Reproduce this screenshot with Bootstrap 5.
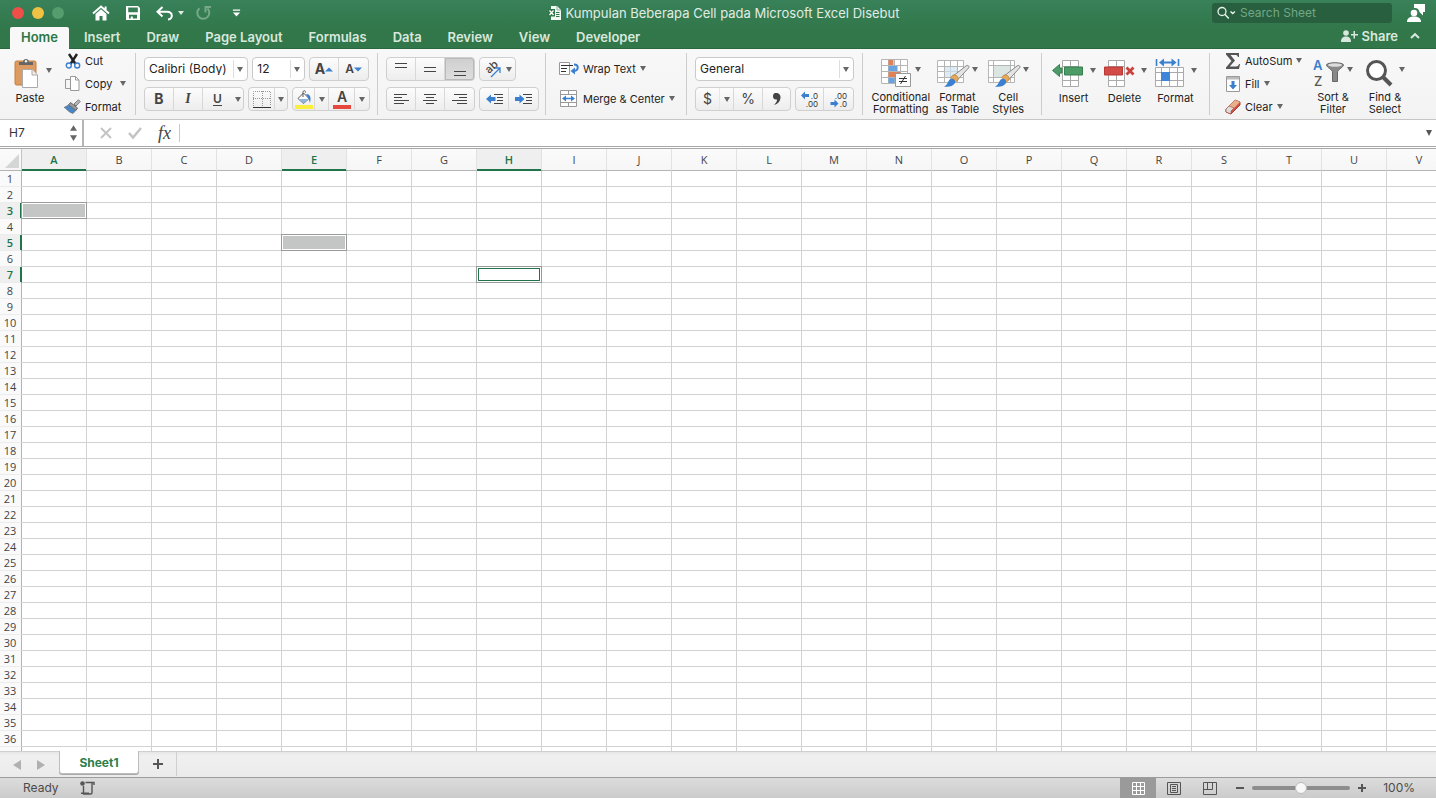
<!DOCTYPE html>
<html lang="en">
<head>
<meta charset="utf-8">
<meta name="viewport" content="width=device-width, initial-scale=1">
<title>Kumpulan Beberapa Cell pada Microsoft Excel Disebut</title>
<link href="https://cdn.jsdelivr.net/npm/bootstrap@5.3.0/dist/css/bootstrap.min.css" rel="stylesheet">
<style>
  body { font-family: Inter, "Liberation Sans", sans-serif; font-size: 11px; line-height: 12px; color: #222; height: 100vh; overflow: hidden; background: #fff; }
  svg { display: block; flex: none; overflow: visible; }
  button { font: inherit; color: inherit; }
  .bare { background: none; border: 0; padding: 0; }
  .caret { width: 0; height: 0; flex: none; border: 3px solid transparent; border-top: 5px solid #666; border-bottom: 0; }

  /* title bar and ribbon tabs */
  .titlebar { background: linear-gradient(#39815a, #31774a 60%, #31774a); border-bottom: 1px solid #2a6841; color: #e0ece4; }
  .title-row { height: 27px; padding-bottom: 1px; }
  .side-part { flex: 1 1 0; }
  .light { width: 12px; height: 12px; border-radius: 50%; }
  .light-close { background: #ef4f49; }
  .light-min { background: #f0c243; }
  .light-max { background: #559d6d; }
  .doc-title { font-size: 13px; line-height: 16px; white-space: nowrap; }
  .quick { padding-left: 12px; }
  .search { width: 180px; height: 20px; background: #285f3e; border-radius: 3px; color: #fff; }
  .search input { background: none; border: 0; outline: 0; color: #fff; font-size: 12px; min-width: 0; line-height: 16px; padding: 0; }
  .search input::placeholder { color: #72a787; opacity: 1; }
  .ribbon-tabs { gap: 4px; padding-left: 10px; }
  .ribbon-tabs .nav-link { font-size: 13px; color: #d9e8de; font-weight: 600; line-height: 18px; padding: 1px 11px 3px; border: 0; border-radius: 2px 2px 0 0; white-space: nowrap; }
  .ribbon-tabs .nav-link.active { background: #f8f8f8; color: #2a7747; }
  .share { font-size: 13px; font-weight: 600; line-height: 16px; color: #d9e8de; }

  /* ribbon */
  .ribbon { background: linear-gradient(#f8f8f8, #f3f3f3); border-bottom: 1px solid #c6c6c6; padding: 4px 0; height: 71px; overflow: hidden; }
  .rgroup { border-right: 1px solid #cdcdcd; padding: 4px 8px 0; height: 62px; flex: none; }
  .rgroup:last-child { border: 0; }
  .tool-row { display: flex; height: 24px; gap: 4px; }
  .tool-row + .tool-row { margin-top: 6px; }
  .tools { display: flex; border: 1px solid #cfcfcf; border-radius: 4px; background: linear-gradient(#fcfcfc, #ededed); }
  .tools button { width: 29px; display: flex; align-items: center; justify-content: center; background: none; border: 0; border-right: 1px solid #d8d8d8; padding: 0; color: #444; }
  .tools button:last-child { border-right: 0; }
  .tools button.on { background: linear-gradient(#cfcfcf, #dedede); box-shadow: inset 0 0 0 1px #b9b9b9; border-radius: 0 3px 3px 0; }
  .tools button.drop { width: 14px; }
  .glyph { font-size: 14px; line-height: 20px; font-weight: 700; }
  .combo { appearance: none; height: 24px; border: 1px solid #cacaca; border-radius: 4px; font-size: 12px; color: #222; padding: 0 18px 0 4px;
    background: #fff url("data:image/svg+xml,%3Csvg xmlns='http://www.w3.org/2000/svg' width='14' height='18'%3E%3Cpath d='M.5 0v18' stroke='%23ddd'/%3E%3Cpath d='M4 7h6l-3 5z' fill='%23666'/%3E%3C/svg%3E") no-repeat right 0 center; }
  .stack { display: flex; flex-direction: column; margin-top: -8px; }
  .stack button, .side button { display: flex; flex: none; align-items: center; gap: 4px; height: 23px; white-space: nowrap; }
  .stack .pic { width: 17px; display: flex; justify-content: center; }
  .big { display: flex; flex-direction: column; align-items: center; width: 52px; white-space: nowrap; text-align: center; }
  .big .pic { display: flex; align-items: center; gap: 2px; height: 32px; margin-bottom: 3px; }
  .big .caret { margin-top: -6px; }
  .paste-label { width: 32px; }

  /* formula bar */
  .formula { height: 29px; border-bottom: 1px solid #a9a9a9; background: #fff; }
  .formula-in { height: 27px; border-bottom: 1px solid #a9a9a9; }
  .namebox { width: 84px; border-right: 2px solid #b5b5b5; padding: 0 5px 0 9px; }
  .namebox input, .fx-input { border: 0; outline: 0; background: none; font-size: 12px; line-height: 16px; min-width: 0; color: #333; padding: 0; }
  .fx { font: italic 18px/20px "Liberation Serif", serif; color: #444; }

  /* sheet */
  .sheet { overflow: hidden; min-height: 0; }
  .cells { border-collapse: separate; border-spacing: 0; table-layout: fixed; width: 0; font-family: "Open Sans", "Noto Sans", sans-serif; font-size: 11px; line-height: 15px; color: #444; }
  .cells th { font-weight: 400; text-align: center; padding: 0; }
  .cells thead th { width: 65px; height: 22px; background: linear-gradient(#fbfbfb, #f6f6f6); border-right: 1px solid #e2e2e2; border-bottom: 1px solid #b4b4b4; }
  .cells thead th.corner { width: 22px; border-right-color: #c4c4c4; }
  .cells thead th.hit { background: #efefef; border-bottom-color: #21744a; box-shadow: inset 0 -1px #21744a; color: #21744a; font-weight: 600; }
  .cells tbody th { height: 16px; background: #fafafa; border-right: 1px solid #b4b4b4; border-bottom: 1px solid #ececec; padding-right: 1px; }
  .cells tbody th.hit { background: #efefef; border-right-color: #21744a; box-shadow: inset -1px 0 #21744a; color: #21744a; font-weight: 600; }
  .cells td { padding: 0; border-right: 1px solid #d2d2d2; border-bottom: 1px solid #d2d2d2; position: relative; }
  .cells td.picked::before, .cells td.current::before { content: ""; position: absolute; inset: -1px; border: 1px solid #9a9a9a; padding: 1px; background: #c3c6c5 content-box; }
  .cells td.current::before { background: #fff; }
  .cells td.current::after { content: ""; position: absolute; inset: 1px; border: 1px solid #21744a; }

  /* sheet tabs and status bar */
  .tabstrip { height: 27px; background: linear-gradient(#e6e6e6, #f0f0f0 4px, #ebebeb); border-top: 1px solid #cfcfcf; border-bottom: 1px solid #9c9c9c; }
  .arrows { width: 59px; padding-left: 13px; }
  .add-sheet { width: 38px; height: 24px; border-right: 1px solid #cfcfcf; }
  .sheet-tab { width: 80px; height: 23px; margin-top: -1px; background: #fff; border: 1px solid #bdbdbd; border-top: 0; border-radius: 0 0 3px 3px; box-shadow: 0 1px 0 #aaa; color: #2a7f4b; font-weight: 700; font-size: 12px; line-height: 16px; padding: 2px 0 0; }
  .statusbar { height: 20px; background: linear-gradient(#dcdcdc, #cbcbcb); color: #4b4b4b; font-size: 12px; line-height: 20px; padding: 0 21px 0 23px; gap: 21px; }
  .view { width: 36px; height: 20px; display: flex; align-items: center; justify-content: center; }
  .view.on { background: #9a9a9a; }
  .zoom { appearance: none; width: 98px; height: 4px; background: #8d8d8d; border-radius: 2px; margin: 0; }
  .zoom::-webkit-slider-thumb { appearance: none; width: 12px; height: 12px; border-radius: 50%; background: #f8f8f8; border: 1px solid #bbb; }
  .zoom-value { width: 49px; }
</style>
</head>
<body class="d-flex flex-column">

<header class="titlebar flex-shrink-0">
  <div class="title-row d-flex align-items-center">
    <div class="quick side-part d-flex align-items-center">
      <div class="d-flex gap-2">
        <span class="light light-close"></span>
        <span class="light light-min"></span>
        <span class="light light-max"></span>
      </div>
      <button class="bare ms-4 ps-1" aria-label="Home"><svg width="18" height="16" viewBox="0 0 18 16"><path d="M1 8.600 9 1.500l8 7.100M13.600 1.500v4" fill="none" stroke="#fff" stroke-width="2"/><path d="M3.500 9 9 4.200 14.500 9v6.500h-4V11h-3v4.500h-4z" fill="#fff"/></svg></button>
      <button class="bare ms-3" aria-label="Save"><svg width="14" height="14" viewBox="0 0 14 14"><path d="M0 0h12l2 2v12H0zM2.200 1.500v4.800h9.600V1.500zM3 8.800v3.700h1.800V10.500h2v2H11V8.800z" fill="#fff" fill-rule="evenodd"/></svg></button>
      <button class="bare ms-3 d-flex align-items-center gap-1" aria-label="Undo"><svg width="18" height="15" viewBox="0 0 18 15"><path d="M6.500 1 1.500 5.800l5 4.700M2 5.800h9c6 0 6.500 7.200 1 7.700" fill="none" stroke="#fff" stroke-width="2"/></svg><svg width="6" height="4"><path d="M0 0h6L3 4z" fill="#e0ece4"/></svg></button>
      <button class="bare ms-2 ps-1" aria-label="Redo"><svg width="16" height="16" viewBox="0 0 16 16"><path d="M3.500 3.200a6 6 0 1 0 8 .3M9.500 7.500V2H15" fill="none" stroke="#75a988" stroke-width="2"/></svg></button>
      <button class="bare ms-3 ps-1" aria-label="Customize toolbar"><svg width="9" height="8" viewBox="0 0 10 8"><path d="M1 0h8v1.500H1zM1 3.500h8L5 7.800z" fill="#fff"/></svg></button>
    </div>
    <div class="doc-title d-flex align-items-center gap-1">
      <svg width="13" height="14" viewBox="0 0 13 14"><path d="M3 0h6l4 4v10H3z" fill="#f3f8f5"/><path d="M9 0v4h4" fill="none" stroke="#8ab69b"/><path d="M8 6.500h3.500M8 8.500h3.500M8 10.500h3.500" stroke="#31774a"/><path d="M0 3h7v7.500H0z" fill="#31774a"/><path d="m1.500 4.500 4 4.500m0-4.500-4 4.500" stroke="#fff" stroke-width="1.300"/></svg>
      <span>Kumpulan Beberapa Cell pada Microsoft Excel Disebut</span>
    </div>
    <div class="side-part d-flex align-items-center justify-content-end">
      <label class="search d-flex align-items-center px-1 me-3">
        <svg class="me-1" width="20" height="14" viewBox="0 0 20 14"><circle cx="6" cy="5.500" r="4" fill="none" stroke="#e9f2ec" stroke-width="1.300"/><path d="m9 8.500 3.800 4M14.500 5.500l2.200 2 2.200-2" fill="none" stroke="#e9f2ec" stroke-width="1.500"/></svg>
        <input class="flex-fill" type="text" placeholder="Search Sheet" aria-label="Search Sheet">
      </label>
      <button class="bare me-2" aria-label="Account"><svg width="20" height="18" viewBox="2 0 20 18"><path d="M8 0h11v8h-2v3.500L13.500 8C13 4.500 10.500 3.500 8 4z" fill="#fff"/><circle cx="8" cy="9" r="3.300" fill="#fff"/><path d="M1 18c0-4 3-5.500 7-5.500s7 1.500 7 5.500z" fill="#fff"/></svg></button>
    </div>
  </div>
  <div class="d-flex align-items-end">
    <ul class="nav nav-tabs ribbon-tabs border-0 flex-fill flex-nowrap">
      <li class="nav-item"><a class="nav-link active" href="#">Home</a></li>
      <li class="nav-item"><a class="nav-link" href="#">Insert</a></li>
      <li class="nav-item"><a class="nav-link" href="#">Draw</a></li>
      <li class="nav-item"><a class="nav-link" href="#">Page Layout</a></li>
      <li class="nav-item"><a class="nav-link" href="#">Formulas</a></li>
      <li class="nav-item"><a class="nav-link" href="#">Data</a></li>
      <li class="nav-item"><a class="nav-link" href="#">Review</a></li>
      <li class="nav-item"><a class="nav-link" href="#">View</a></li>
      <li class="nav-item"><a class="nav-link" href="#">Developer</a></li>
    </ul>
    <div class="share d-flex align-items-center gap-1 pb-1 pe-3">
      <button class="bare d-flex align-items-center gap-1"><svg width="18" height="12" viewBox="0 0 18 12"><circle cx="6" cy="3" r="2.800" fill="#d9e8de"/><path d="M1 12c0-4 2-5.500 5-5.500s5 1.500 5 5.500zM11 4h2.500V1H15v3h3v1.500h-3v3h-1.500v-3H11z" fill="#d9e8de"/></svg>Share</button>
      <button class="bare ms-2" aria-label="Collapse ribbon"><svg width="10" height="6" viewBox="0 0 10 6"><path d="m1 5 4-3.800L9 5" fill="none" stroke="#d9e8de" stroke-width="2"/></svg></button>
    </div>
  </div>
</header>

<div class="ribbon d-flex flex-shrink-0" role="toolbar" aria-label="Home">
  <!-- clipboard -->
  <div class="rgroup d-flex" style="width:136px;padding-left:14px">
    <button class="bare big align-items-start" style="width:46px">
      <span class="pic"><svg width="26" height="31" viewBox="0 0 26 31"><rect x="1" y="3" width="21" height="24" rx="1.500" fill="#dd9b62" stroke="#c38040"/><path d="M5 7V4h4c0-4 6-4 6 0h4v3z" fill="#666"/><circle cx="12" cy="3.300" r="1.200" fill="#f3f3f3"/><path d="M8.500 11.500H18l5.500 5.500v12.500h-15z" fill="#fff" stroke="#aaa"/><path d="M18 11.500V17h5.500" fill="#eee" stroke="#aaa"/></svg><span class="caret ms-1"></span></span>
      <span class="paste-label">Paste</span>
    </button>
    <div class="stack ms-1">
      <button class="bare"><span class="pic"><svg width="16" height="16" viewBox="0 0 16 16"><path d="m4 1 6.500 10M12 1 5.500 11" stroke="#222" stroke-width="2.400"/><circle cx="3.800" cy="12.500" r="2.500" fill="none" stroke="#3a80cf" stroke-width="1.400"/><circle cx="12.200" cy="12.500" r="2.500" fill="none" stroke="#3a80cf" stroke-width="1.400"/></svg></span>Cut</button>
      <button class="bare"><span class="pic"><svg width="15" height="16" viewBox="0 0 15 16"><path d="M.5 3.500h7v9h-7z" fill="#f5f5f5" stroke="#999"/><path d="M5.500.500h5l3.500 3.500v10.500H5.500z" fill="#fff" stroke="#999"/><path d="M10.500.500V4H14" fill="none" stroke="#999"/></svg></span>Copy<span class="caret ms-1"></span></button>
      <button class="bare"><span class="pic"><svg width="17" height="15" viewBox="0 0 17 15"><path d="M10 5 14.500.800l1.700 1.700L12 7z" fill="#bbb" stroke="#777"/><path d="m6.500 3.500 7 5.500-1.700 2.500L4.500 6z" fill="#999" stroke="#666"/><path d="M4.500 6 0 8.500c2.500.5 3.500 4.500 9 6l2.800-3z" fill="#4a86c5" stroke="#666" stroke-width=".6"/></svg></span>Format</button>
    </div>
  </div>
  <!-- font -->
  <div class="rgroup" style="width:242px">
    <div class="tool-row">
      <select class="combo" style="width:105px" aria-label="Font"><option>Calibri (Body)</option></select>
      <select class="combo" style="width:53px" aria-label="Font size"><option>12</option></select>
      <div class="tools">
        <button aria-label="Increase font size"><span class="glyph">A</span><svg width="8" height="5"><path d="M0 4.500 4 .5l4 4z" fill="#3a80cf"/></svg></button>
        <button aria-label="Decrease font size"><span style="font-size:12px;font-weight:600">A</span><svg width="8" height="5"><path d="M0 .5h8l-4 4z" fill="#3a80cf"/></svg></button>
      </div>
    </div>
    <div class="tool-row">
      <div class="tools">
        <button class="glyph">B</button>
        <button class="glyph" style="font-family:'Liberation Serif',serif"><i>I</i></button>
        <button class="glyph border-0"><span style="border-bottom:1px solid #444;font-size:12px;line-height:13px;font-weight:600">U</span></button>
        <button class="drop" style="width:11px" aria-label="Underline style"><span class="caret"></span></button>
      </div>
      <div class="tools">
        <button aria-label="Borders" style="width:26px"><svg width="18" height="17" viewBox="0 0 18 17"><path d="M.5 15V.5h17V15M9.500 0v15M0 7.500h18" fill="none" stroke="#999" stroke-dasharray="1 1"/><path d="M0 16.500h18" stroke="#333"/></svg></button>
        <button class="drop" style="width:12px" aria-label="Border options"><span class="caret"></span></button>
      </div>
      <div class="tools">
        <button aria-label="Fill color" style="width:22px"><svg width="18" height="19" viewBox="0 0 18 19"><path d="M3 8.500 8.500 3l5.500 5.500-5.500 5z" fill="#fff" stroke="#555"/><path d="M3.500 9h10l-5 4.500z" fill="#8fb7e3"/><path d="M8 7V2.500C8 0 10.500 0 10.500 2.500" fill="none" stroke="#555"/><path d="M11 4c4 0 5.500 3 4 9-1-2-.5-4-2-5z" fill="#3a80cf"/><path d="M0 15h18v4H0z" fill="#fbef3d"/></svg></button>
        <button class="drop" aria-label="Fill options"><span class="caret"></span></button>
        <button style="width:26px" aria-label="Font color"><svg width="18" height="19" viewBox="0 0 18 19"><text x="9" y="12" text-anchor="middle" font-size="14" font-weight="600" fill="#444">A</text><path d="M0 15h18v4H0z" fill="#e6483f"/></svg></button>
        <button class="drop" aria-label="Font color options"><span class="caret"></span></button>
      </div>
    </div>
  </div>
  <!-- alignment -->
  <div class="rgroup" style="width:168px">
    <div class="tool-row">
      <div class="tools">
        <button aria-label="Top align"><svg width="12" height="16"><path d="M0 2.500h12M0 6.500h12" stroke="#444"/></svg></button>
        <button aria-label="Middle align"><svg width="12" height="16"><path d="M0 6.500h12M0 10.500h12" stroke="#444"/></svg></button>
        <button class="on" aria-label="Bottom align"><svg width="12" height="16"><path d="M0 10.500h12M0 14.500h12" stroke="#444"/></svg></button>
      </div>
      <div class="tools">
        <button style="width:35px;gap:4px" aria-label="Orientation"><svg width="18" height="18" viewBox="0 0 18 18"><text x="5" y="14" font-size="11" font-weight="500" fill="#444" transform="rotate(-42 5 14)">ab</text><path d="m7 17 8.500-8.500M11 8h5v5" fill="none" stroke="#3a80cf" stroke-width="1.300"/></svg><span class="caret"></span></button>
      </div>
    </div>
    <div class="tool-row">
      <div class="tools">
        <button aria-label="Align left"><svg width="15" height="12"><path d="M0 1.500h13M0 4.500h8M0 7.500h15M0 10.500h10" stroke="#444"/></svg></button>
        <button aria-label="Center"><svg width="14" height="12"><path d="M1 1.500h12M3 4.500h8M0 7.500h14M3 10.500h8" stroke="#444"/></svg></button>
        <button aria-label="Align right"><svg width="15" height="12"><path d="M2 1.500h13M7 4.500h8M0 7.500h15M5 10.500h10" stroke="#444"/></svg></button>
      </div>
      <div class="tools">
        <button aria-label="Decrease indent"><svg width="17" height="12"><path d="M8 1.500h9M11 4.500h6M11 7.500h6M8 10.500h9" stroke="#444"/><path d="m0 6 5-4.500V4h4.500v4H5v2.500z" fill="#3a80cf"/></svg></button>
        <button aria-label="Increase indent"><svg width="17" height="12"><path d="M8 1.500h9M11 4.500h6M11 7.500h6M8 10.500h9" stroke="#444"/><path d="M9.500 6l-5-4.500V4H0v4h4.500v2.500z" fill="#3a80cf"/></svg></button>
      </div>
    </div>
  </div>
  <div class="rgroup side" style="width:141px;padding-left:13px">
    <div class="tool-row"><button class="bare"><svg width="20" height="13" viewBox="0 0 20 13"><path d="M.5.500h10v12H.5z" fill="#fff" stroke="#999"/><path d="M2 3.500h12M2 6.500h6M2 9.500h5" stroke="#333"/><path d="M15 2.500c5 0 5 6 0 6.500" fill="none" stroke="#3a80cf" stroke-width="2"/><path d="m11.500 9 4.500-3.500v7z" fill="#3a80cf"/></svg>Wrap Text<span class="caret"></span></button></div>
    <div class="tool-row"><button class="bare"><svg width="20" height="17" viewBox="0 0 20 17"><path d="M1.500.500h16v16h-16zM1.500 4.500h16M1.500 12.500h16M9.500.500v4M9.500 12.500v4" fill="#fff" stroke="#999"/><path d="M5 8.500h9" stroke="#3a80cf" stroke-width="1.500"/><path d="m3 8.500 4-3v6zM16 8.500l-4-3v6z" fill="#3a80cf"/></svg>Merge &amp; Center<span class="caret"></span></button></div>
  </div>
  <!-- number -->
  <div class="rgroup" style="width:176px">
    <div class="tool-row"><select class="combo" style="width:159px" aria-label="Number format"><option>General</option></select></div>
    <div class="tool-row">
      <div class="tools">
        <button style="width:24px;font-size:14px;border-right-color:#e6e6e6">$</button>
        <button class="drop" aria-label="Currency options"><span class="caret"></span></button>
        <button style="font-size:14px">%</button>
        <button aria-label="Comma style" style="width:27px"><svg width="8" height="12" viewBox="0 0 8 12"><path d="M1 .5c4-1.500 7 1 6.500 4.500C7 8.500 5 11 1 12 3.500 9.500 4 8 4 6.500 1.500 7 0 5.500 0 3.500 0 2 .4 1 1 .5z" fill="#444"/></svg></button>
      </div>
      <div class="tools">
        <button style="width:28px" aria-label="Increase decimal"><svg width="18" height="17" viewBox="0 0 18 17"><path d="m0 4.500 4-4V3h4v3H4v2.500z" fill="#3a80cf"/><text x="17" y="8" text-anchor="end" font-size="8" fill="#333">.0</text><text x="17" y="16" text-anchor="end" font-size="8" fill="#333">.00</text></svg></button>
        <button aria-label="Decrease decimal"><svg width="18" height="17" viewBox="0 0 18 17"><path d="m8.500 12.500-4-4V11h-4v3h4v2.500z" fill="#3a80cf"/><text x="17" y="8" text-anchor="end" font-size="8" fill="#333">.00</text><text x="17" y="16" text-anchor="end" font-size="8" fill="#333">.0</text></svg></button>
      </div>
    </div>
  </div>
  <!-- styles -->
  <div class="rgroup d-flex" style="width:179px;padding-left:7px">
    <button class="bare big" style="width:62px"><span class="pic gap-1"><svg width="30" height="28" viewBox="0 0 30 28"><path d="M.5.500h26v24H.5zM7.500.500v24M13.500.500v24M19.500.500v24M.5 6.500h26M.5 12.500h26M.5 18.500h26" fill="#fff" stroke="#b5b5b5"/><path d="M7.500 1h5v5h-5zM7.500 13h12v5h-12z" fill="#e08158"/><path d="M7.500 7h9v5h-9zM7.500 19h6v5h-6z" fill="#6aa4e0"/><path d="M14.500 14.500h15v13h-15z" fill="#fff" stroke="#999"/><path d="M18 19.500h8M18 22.500h8M24.500 17l-5 8" stroke="#333"/></svg><span class="caret"></span></span><span>Conditional<br>Formatting</span></button>
    <button class="bare big"><span class="pic"><svg width="33" height="28" viewBox="0 0 33 28"><path d="M.5 1.500h26v22H.5zM7.500 1.500v22M13.500 1.500v22M20.500 1.500v22M.5 7.500h26M.5 12.500h26M.5 18.500h26" fill="#fff" stroke="#b5b5b5"/><path d="M8 8h12v10H8z" fill="#cfe3ef" fill-opacity=".7"/><use href="#brush"/></svg><span class="caret"></span></span><span>Format<br>as Table</span></button>
    <button class="bare big" style="width:50px"><span class="pic"><svg width="33" height="28" viewBox="0 0 33 28"><path d="M.5 1.500h26v22H.5zM5.500 1.500v22M22.500 1.500v22M.5 6.500h26M.5 18.500h26" fill="#fff" stroke="#b5b5b5"/><path d="M6 7h16v11H6z" fill="#dbe6e2"/><g id="brush"><path d="M16 17 29 7c2-1.500 4 .5 2.500 2L20.500 21z" fill="#e4e4e4" stroke="#888"/><path d="M14 18.500c1-3.500 5-3 6.500-1 2 3-1 6-3.500 5z" fill="#e6a95a" stroke="#b77a2c" stroke-width=".7"/><path d="M13.500 20c3-1 5.500 1.500 4.500 4-2.500 4-7 4-11 3.500 4-1.500 3.500-5.500 6.500-7.500z" fill="#3a7fd0"/></g></svg><span class="caret"></span></span><span>Cell<br>Styles</span></button>
  </div>
  <!-- cells -->
  <div class="rgroup d-flex" style="width:168px;padding-left:6px">
    <button class="bare big"><span class="pic"><svg width="32" height="27" viewBox="0 0 32 27"><path d="M10.500.500h16v26h-16zM18.500.500v26M10.500 6.500h16M10.500 20.500h16" fill="#fff" stroke="#aaa"/><path d="m.5 10.500 7-6V8H10v5H7.500v3.500zM12.500 7h18v8h-18z" fill="#4d9c67" stroke="#39804f"/></svg><span class="caret ms-1"></span></span><span>Insert</span></button>
    <button class="bare big"><span class="pic"><svg width="32" height="27" viewBox="0 0 32 27"><path d="M5.500.500h16v26h-16zM13.500.500v26M5.500 6.500h16M5.500 20.500h16" fill="#fff" stroke="#aaa"/><path d="M1.500 7h18v8h-18z" fill="#d24b47" stroke="#b83833"/><path d="m23.500 7.500 7 7m0-7-7 7" stroke="#c9413c" stroke-width="2.800"/></svg><span class="caret ms-1"></span></span><span>Delete</span></button>
    <button class="bare big"><span class="pic"><svg width="30" height="30" viewBox="0 0 30 30"><path d="M1.500 1v7M23.500 1v7" stroke="#3a80cf" stroke-width="1.600"/><path d="M8 4.500h10" stroke="#3a80cf" stroke-width="2"/><path d="m4 4.500 5-4v8zM21.500 4.500l-5-4v8z" fill="#3a80cf"/><path d="M.5 9.500h28v19H.5zM6.500 9.500v19M14.500 9.500v19M22.500 9.500v19M.5 14.500h28M.5 22.500h28" fill="#fff" stroke="#aaa"/><path d="M6 14h9v9H6z" fill="#3f86d8"/></svg><span class="caret ms-1"></span></span><span>Format</span></button>
  </div>
  <!-- editing -->
  <div class="rgroup d-flex" style="padding-left:14px">
    <div class="stack" style="width:83px">
      <button class="bare"><span class="pic"><svg width="14" height="16" viewBox="0 0 14 16"><path d="M0 0h13v4h-1c-.5-1.500-1-2-3-2H4.500l4.500 5.500L3.800 13.500H10c2 0 2.500-1 3-2.500h1l-1 5H0v-1.500L5.500 8 0 1.500z" fill="#555"/></svg></span>AutoSum<span class="caret"></span></button>
      <button class="bare"><span class="pic"><svg width="14" height="16" viewBox="0 0 14 16"><path d="M.5.500h13v15H.5z" fill="#fff" stroke="#999"/><path d="M1 1h12v2.500H1z" fill="#bbb"/><path d="M5.500 5h3v4H11l-4 4.500L3 9h2.500z" fill="#3a80cf"/></svg></span>Fill<span class="caret"></span></button>
      <button class="bare"><span class="pic"><svg width="16" height="16" viewBox="0 0 16 16"><path d="M1 10 10 1l5 2v3l-9 9-5-2z" fill="#cf4f45" stroke="#a8443b"/><path d="m1 10 9-9 5 2-9 9z" fill="#e9b18b"/><path d="m1 10 3-3 5 2-3 3v3l-5-2z" fill="#ddd" stroke="#a8443b" stroke-width=".6"/></svg></span>Clear<span class="caret"></span></button>
    </div>
    <button class="bare big"><span class="pic"><svg width="32" height="28" viewBox="0 0 32 28"><text x="0" y="11" font-size="13" font-weight="600" fill="#3a80cf">A</text><text x="1" y="27" font-size="13" font-weight="500" fill="#555">Z</text><path d="M13.500 6c0-3 17-3 17 0 0 2-6 5-6 7v9.500h-5V13c0-2-6-5-6-7z" fill="#888" stroke="#666"/><ellipse cx="22" cy="6" rx="7" ry="1.800" fill="#ddd"/></svg><span class="caret"></span></span><span>Sort &amp;<br>Filter</span></button>
    <button class="bare big"><span class="pic"><svg width="28" height="28" viewBox="0 0 28 28"><circle cx="11.500" cy="11.500" r="9" fill="#fff" stroke="#555" stroke-width="3"/><path d="m18 18 8 8" stroke="#555" stroke-width="4"/></svg><span class="caret ms-1"></span></span><span>Find &amp;<br>Select</span></button>
  </div>
</div>

<div class="formula flex-shrink-0">
  <div class="formula-in d-flex align-items-center">
    <div class="namebox d-flex align-items-center h-100">
      <input class="flex-fill" type="text" value="H7" aria-label="Name box">
      <svg width="7" height="20" viewBox="0 0 8 20"><path d="M0 7.500 4 1l4 6.500zM0 12.500h8L4 19z" fill="#666"/></svg>
    </div>
    <div class="d-flex align-items-center gap-3 ps-3 pe-2">
      <button class="bare" aria-label="Cancel"><svg width="12" height="12"><path d="m1 1 10 10M11 1 1 11" stroke="#c4c4c4" stroke-width="2"/></svg></button>
      <button class="bare" aria-label="Enter"><svg width="14" height="12"><path d="m1 6 4 4.500L13 1" fill="none" stroke="#c4c4c4" stroke-width="2.500"/></svg></button>
      <label class="fx" for="fxInput">fx</label>
    </div>
    <span class="vr my-1 opacity-25"></span>
    <input id="fxInput" class="fx-input flex-fill mx-2" type="text">
    <button class="bare me-1" aria-label="Expand formula bar"><svg width="6" height="6"><path d="M0 0h6L3 6z" fill="#555"/></svg></button>
  </div>
</div>

<main class="sheet flex-fill">
  <table class="cells" id="cells" aria-label="Sheet1"></table>
</main>

<nav class="tabstrip d-flex flex-shrink-0" aria-label="Sheets">
  <div class="arrows d-flex align-items-center gap-3">
    <button class="bare" aria-label="Previous sheet"><svg width="8" height="10"><path d="M8 0v10L0 5z" fill="#b0b0b0"/></svg></button>
    <button class="bare" aria-label="Next sheet"><svg width="8" height="10"><path d="M0 0v10l8-5z" fill="#b0b0b0"/></svg></button>
  </div>
  <button class="sheet-tab">Sheet1</button>
  <div class="add-sheet d-flex"><button class="bare d-flex flex-fill align-items-center justify-content-center" aria-label="New sheet"><svg width="12" height="12"><path d="M6 1v10M1 6h10" stroke="#555" stroke-width="2"/></svg></button></div>
</nav>

<footer class="statusbar d-flex flex-shrink-0 align-items-center">
  <span>Ready</span>
  <button class="bare" aria-label="Record macro"><svg width="15" height="14" viewBox="0 0 15 14"><path d="M5.500 1.500h8.500v2.500M12 1.500v10c0 1.500-1 1.500-1.500 1.500H3M3.500 5v7" fill="none" stroke="#555" stroke-width="1.400"/><path d="M1 11.500h8V13H1z" fill="#555"/><circle cx="2.500" cy="2.500" r="2.300" fill="#555"/></svg></button>
  <div class="ms-auto d-flex align-items-center">
    <button class="bare view on" aria-label="Normal view"><svg width="13" height="13"><path d="M.5.500h12v12H.5zM4.500.500v12M8.500.500v12M.5 4.500h12M.5 8.500h12" fill="none" stroke="#fff"/></svg></button>
    <button class="bare view" aria-label="Page layout view"><svg width="14" height="13"><path d="M.5.500h13v12H.5zM3.500 2.500h7v8h-7zM5 4.500h4M5 6.500h4M5 8.500h4" fill="none" stroke="#555"/></svg></button>
    <button class="bare view" aria-label="Page break view"><svg width="14" height="13"><path d="M.5.500h13v12H.5zM4.500.500v7M9.500.500v7M.5 7.500h9" fill="none" stroke="#555"/></svg></button>
    <button class="bare ms-2" aria-label="Zoom out"><svg width="8" height="10"><path d="M0 5h8" stroke="#555" stroke-width="2"/></svg></button>
    <input class="zoom mx-2" type="range" min="0" max="200" value="100" aria-label="Zoom">
    <button class="bare" aria-label="Zoom in"><svg width="8" height="10"><path d="M0 5h8M4 1v8" stroke="#555" stroke-width="2"/></svg></button>
    <span class="zoom-value text-end">100%</span>
  </div>
</footer>

<script src="https://cdn.jsdelivr.net/npm/bootstrap@5.3.0/dist/js/bootstrap.bundle.min.js"></script>
<script>
  // Fill the visible area of the sheet with rows and columns.
  const picked = ['A3', 'E5'], current = 'H7';
  const colName = i => (i > 25 ? String.fromCharCode(64 + Math.floor(i / 26)) : '') + String.fromCharCode(65 + i % 26);
  function drawSheet() {
    const area = document.querySelector('.sheet');
    const cols = Math.ceil((area.clientWidth - 22) / 65);
    const rows = Math.floor((area.clientHeight - 22) / 16);
    const hits = [...picked, current];
    let html = '<thead><tr><th class="corner"><svg width="21" height="20"><path d="M19 4v14H5z" fill="#d4d6d5"/></svg></th>';
    for (let c = 0; c < cols; c++)
      html += `<th scope="col" class="${hits.some(h => h.replace(/\d+/, '') === colName(c)) ? 'hit' : ''}">${colName(c)}</th>`;
    html += '</tr></thead><tbody>';
    for (let r = 1; r <= rows + 1; r++) {
      html += `<tr><th scope="row" class="${hits.some(h => h.replace(/\D+/, '') === String(r)) ? 'hit' : ''}">${r > rows ? '' : r}</th>`;
      for (let c = 0; c < cols; c++) {
        const ref = colName(c) + r;
        html += `<td class="${ref === current ? 'current' : picked.includes(ref) ? 'picked' : ''}"></td>`;
      }
      html += '</tr>';
    }
    document.getElementById('cells').innerHTML = html + '</tbody>';
  }
  drawSheet();
  addEventListener('resize', drawSheet);
</script>
</body>
</html>
